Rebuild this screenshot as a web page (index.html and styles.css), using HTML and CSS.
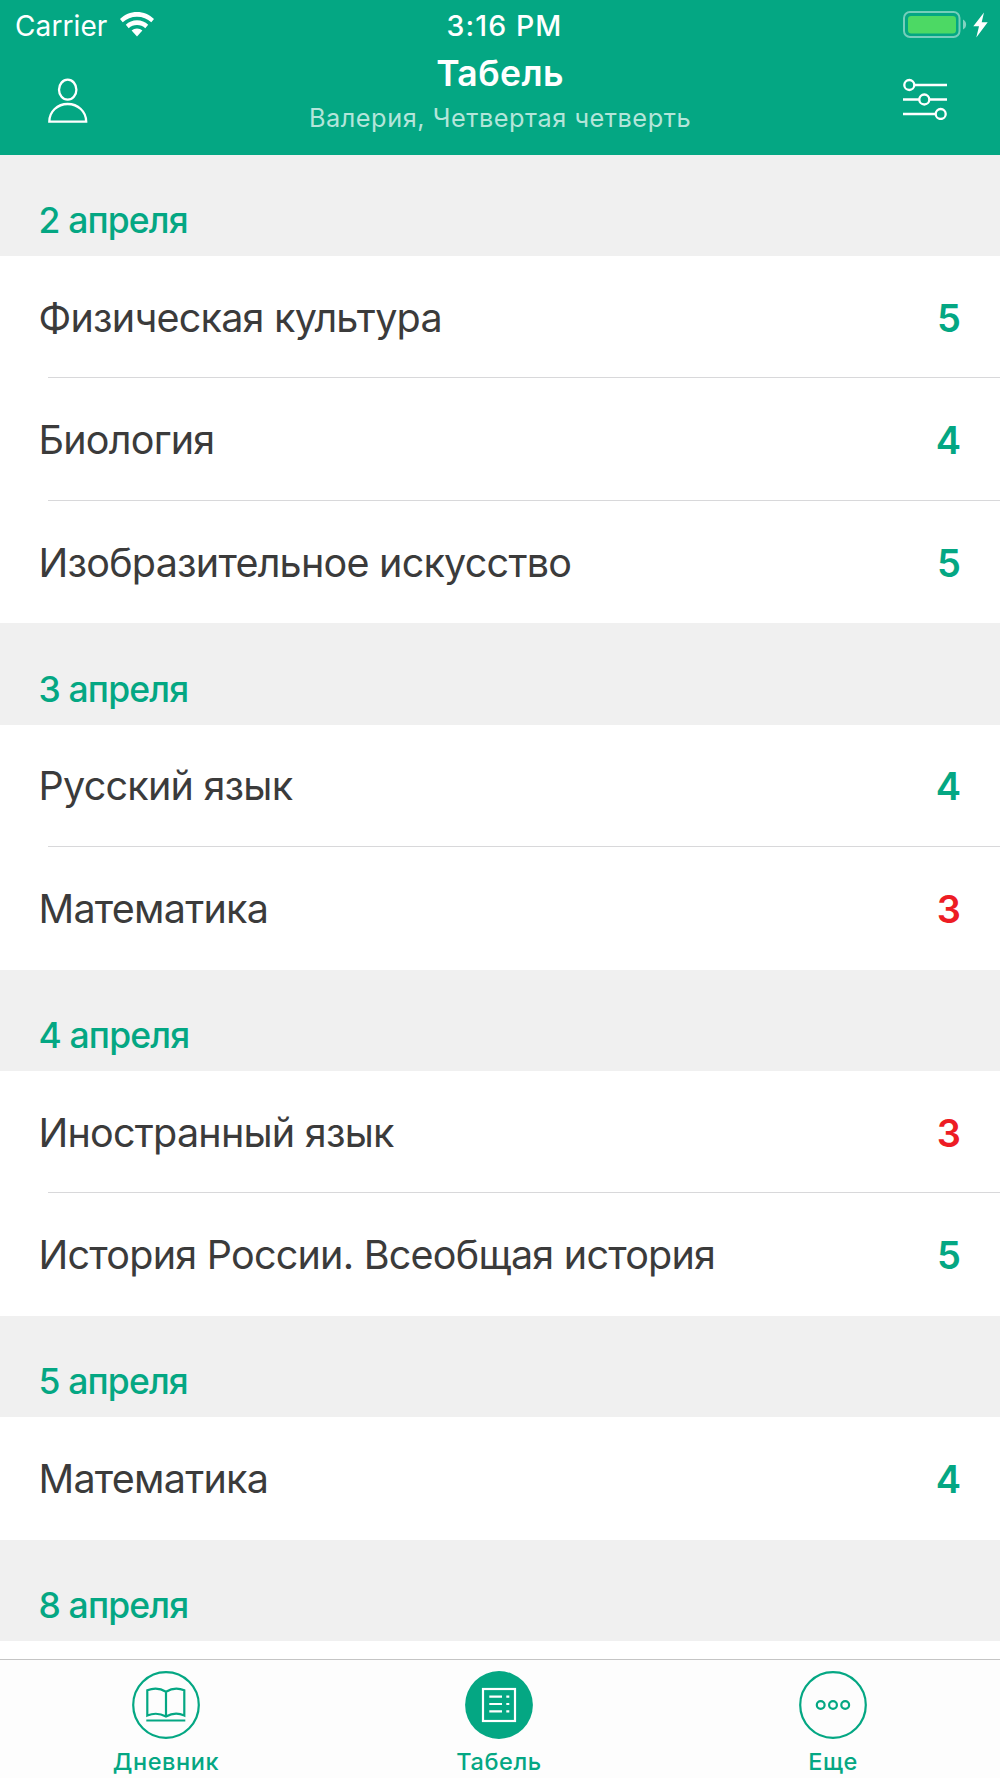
FILE: index.html
```html
<!DOCTYPE html>
<html lang="ru">
<head>
<meta charset="utf-8">
<title>Табель</title>
<link rel="stylesheet" href="styles.css">
</head>
<body>
<div class="screen">
  <header class="header">
    <div class="status">
      <div class="status-left">
        <span class="carrier">Carrier</span>
        <svg class="wifi" width="34" height="25" viewBox="0 0 34 25" fill="#fff">
          <path d="M17 0C23.500 0 29.400 2.600 34 7L31.300 10.200C27.400 6.700 22.500 4.700 17 4.700S6.600 6.700 2.700 10.200L0 7C4.600 2.600 10.500 0 17 0Z"/>
          <path d="M17 8.300C21.300 8.300 25.200 10 28.200 12.800L25.300 16.200C23 14.200 20.200 13 17 13S11 14.200 8.700 16.200L5.800 12.800C8.800 10 12.700 8.300 17 8.300Z"/>
          <path d="M17 16.500C19 16.500 20.900 17.300 22.400 18.600L17 24.600L11.600 18.600C13.100 17.300 15 16.500 17 16.500Z"/>
        </svg>
      </div>
      <span class="time">3:16 PM</span>
      <div class="status-right">
        <svg width="86" height="30" viewBox="0 0 86 30">
          <rect x="1" y="2" width="55.500" height="25" rx="6" fill="none" stroke="#fff" stroke-opacity=".45" stroke-width="2"/>
          <rect x="5" y="6" width="48" height="17.500" rx="3.200" fill="#4cd964"/>
          <path d="M60 9.500C64.200 11.500 64.200 17.500 60 19.500Z" fill="#fff" fill-opacity=".5"/>
          <path d="M81 2.500L70.300 16.200H76L73.300 27.600L84.700 12.300H78.700Z" fill="#fff"/>
        </svg>
      </div>
    </div>
    <div class="nav">
      <svg width="40" height="45" viewBox="0 0 40 45" fill="none" stroke="#fff" stroke-width="2.300">
        <ellipse cx="19.700" cy="11.700" rx="8.700" ry="10"/>
        <path d="M1.300 43.700C1.300 33.400 9.500 26 19.700 26S38.200 33.400 38.200 43.700Z"/>
      </svg>
      <div class="titles">
        <h1 class="title">Табель</h1>
        <p class="subtitle">Валерия, Четвертая четверть</p>
      </div>
      <svg class="filter" width="44" height="42" viewBox="0 0 44 42" fill="none" stroke="#fff" stroke-width="2.300">
        <circle cx="6.300" cy="7" r="5"/><path d="M11.300 7H44"/>
        <path d="M0 21.500H16.300M26.300 21.500H44"/><circle cx="21.300" cy="21.500" r="5"/>
        <path d="M0 36H32.700"/><circle cx="37.700" cy="36" r="5"/>
      </svg>
    </div>
  </header>

  <main class="list">
    <h2 class="date">2 апреля</h2>
    <div class="row"><span class="subject">Физическая культура</span><span class="grade">5</span></div>
    <div class="row"><span class="subject">Биология</span><span class="grade">4</span></div>
    <div class="row"><span class="subject">Изобразительное искусство</span><span class="grade">5</span></div>
    <h2 class="date">3 апреля</h2>
    <div class="row"><span class="subject">Русский язык</span><span class="grade">4</span></div>
    <div class="row"><span class="subject">Математика</span><span class="grade bad">3</span></div>
    <h2 class="date">4 апреля</h2>
    <div class="row"><span class="subject">Иностранный язык</span><span class="grade bad">3</span></div>
    <div class="row"><span class="subject">История России. Всеобщая история</span><span class="grade">5</span></div>
    <h2 class="date">5 апреля</h2>
    <div class="row"><span class="subject">Математика</span><span class="grade">4</span></div>
    <h2 class="date">8 апреля</h2>
  </main>

  <nav class="tabs">
    <div class="tab">
      <svg width="68" height="68" viewBox="0 0 68 68" fill="none" stroke="#04a783" stroke-width="2.200">
        <circle cx="34" cy="34" r="32.800"/>
        <path d="M34 20.700C28 17 21 17 15.300 19.300V44.500C21 42.200 28 42.200 34 45.500C40 42.200 47 42.200 52.300 44.500V19.300C47 17 40 17 34 20.700V45.500M14.300 49.500H53.300"/>
      </svg>
      <span class="tab-label">Дневник</span>
    </div>
    <div class="tab">
      <svg width="68" height="68" viewBox="0 0 68 68" fill="none" stroke="#fff" stroke-width="2.200">
        <circle cx="34" cy="34" r="33.900" fill="#04a783" stroke="none"/>
        <rect x="18" y="18" width="32" height="32"/>
        <path d="M24.300 25.700H37M24.300 33H37M24.300 40.300H37M41.300 25.700H44.300M41.300 33H44.300M41.300 40.300H44.300"/>
      </svg>
      <span class="tab-label">Табель</span>
    </div>
    <div class="tab">
      <svg width="68" height="68" viewBox="0 0 68 68" fill="none" stroke="#04a783" stroke-width="2.200">
        <circle cx="34" cy="34" r="32.800"/>
        <circle cx="21.700" cy="34" r="3.900"/><circle cx="34" cy="34" r="3.900"/><circle cx="46.200" cy="34" r="3.900"/>
      </svg>
      <span class="tab-label">Еще</span>
    </div>
  </nav>
</div>
</body>
</html>
```
FILE: styles.css
```css
* { box-sizing: border-box; margin: 0; padding: 0; }
body { font-family: Inter, "Liberation Sans", sans-serif; color: #3b3b3b; background: #fff; }
svg { display: block; flex: none; }
.screen { width: 1000px; height: 1778px; overflow: hidden; display: flex; flex-direction: column; }

.header { height: 154.600px; flex: none; background: #04a783; color: #fff; }
.status { height: 50px; display: grid; grid-template-columns: 1fr auto 1fr; align-items: center; padding: 0 11px 0 15px; font-size: 28px; line-height: 34px; }
.status-left { display: flex; align-items: center; gap: 13px; }
.carrier { letter-spacing: 0.100px; padding-top: 2px; }
.wifi { margin-bottom: 2px; }
.time { font-size: 28.500px; font-weight: 500; letter-spacing: 1.100px; margin-left: 5px; padding-top: 1px; }
.status-right { display: flex; justify-content: flex-end; }
.nav { display: grid; grid-template-columns: 1fr auto 1fr; align-items: start; padding: 0 48px; }
.nav > svg { margin-top: 28px; }
.nav > .filter { justify-self: end; margin-right: 5px; }
.titles { text-align: center; }
.title { font-size: 35.500px; line-height: 44px; font-weight: 600; letter-spacing: 0.400px; margin-top: 2px; }
.subtitle { font-size: 25.300px; line-height: 32px; margin-top: 6px; color: #b4e5da; letter-spacing: 0.540px; }

.list { flex: 1; min-height: 0; overflow: hidden; }
.date { height: 101.300px; padding: 45.200px 38.500px 0; background: #f0f0f0; color: #04a783; font-size: 35.500px; line-height: 42px; font-weight: 500; letter-spacing: -0.850px; }
.row { height: 122.500px; display: flex; justify-content: space-between; align-items: center; padding: 1px 39px 0 38.500px; font-size: 39.500px; line-height: 48px; }
.row:has(+ .row) { background: linear-gradient(#d8d8da, #d8d8da) 48px 100% / 100% 1.300px no-repeat; }
.subject { letter-spacing: -0.760px; }
.grade { color: #04a783; font-weight: 600; font-size: 38px; }
.bad { color: #ed1c24; }

.tabs { flex: none; height: 119.500px; border-top: 1.500px solid #c5c5c5; background: #fdfdfd; display: grid; grid-template-columns: 332px 334px 334px; }
.tab { display: flex; flex-direction: column; align-items: center; padding-top: 11.500px; }
.tab-label { margin-top: 8.500px; font-size: 23.500px; line-height: 28px; font-weight: 500; letter-spacing: 0.600px; color: #04a783; }
```
